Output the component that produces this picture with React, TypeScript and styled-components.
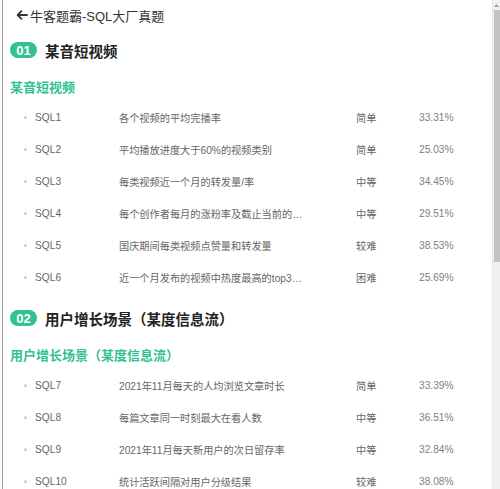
import React from 'react'
import styled, { createGlobalStyle } from 'styled-components'

const GlobalStyle = createGlobalStyle`
  html, body {
    margin: 0;
    padding: 0;
    background: #ffffff;
    font-family: "Liberation Sans", "Noto Sans CJK SC", sans-serif;
  }
`

const green = '#33c28f'

const Viewport = styled.div`
  height: 489px;
  width: 492px;
  overflow-y: auto;
  overflow-x: hidden;
  background: #fff;
  scrollbar-width: none;
`

// drawn scrollbar (headless shots hide the native one)
const ScrollTrack = styled.div`
  position: fixed;
  top: 0;
  right: 0;
  width: 8px;
  height: 489px;
  background: #f0f0f0;
  border-left: 1px solid #e8e8e8;
  box-sizing: border-box;
`

const ScrollArrow = styled.div`
  height: 10px;
  display: flex;
  align-items: center;
  justify-content: center;
`

const ScrollThumb = styled.div`
  margin-left: 1px;
  width: 6px;
  height: 252px;
  background: #c3c3c3;
`

const Page = styled.div`
  margin-left: 2px;
  border-left: 1px solid #9c9c9c;
  padding: 0 0 80px 7px;
`

const TitleBar = styled.div`
  height: 30px;
  display: flex;
  align-items: center;
  gap: 2px;
  padding-left: 6px;
  font-size: 13px;
  color: #333;
`

const Section = styled.section`
  padding-top: 5px;
  & + & {
    padding-top: 10px;
  }
`

const SectionHead = styled.div`
  height: 30px;
  display: flex;
  align-items: center;
  gap: 8px;
`

const Badge = styled.span`
  width: 27px;
  height: 16px;
  border-radius: 8px;
  background: ${green};
  color: #fff;
  font-size: 13px;
  font-weight: bold;
  display: flex;
  align-items: center;
  justify-content: center;
`

const SectionTitle = styled.h2`
  margin: 0;
  font-size: 14.5px;
  font-weight: bold;
  color: #222;
`

const SubTitle = styled.h3`
  margin: 6px 0 0;
  height: 30px;
  display: flex;
  align-items: center;
  font-size: 13px;
  font-weight: bold;
  color: ${green};
`

const Row = styled.div`
  height: 32px;
  display: grid;
  grid-template-columns: 11px 84px 237px 63px 60px;
  align-items: center;
  font-size: 10.2px;
  color: #666;
  padding-left: 14px;
`

const Dot = styled.span`
  width: 3px;
  height: 3px;
  border-radius: 50%;
  background: #cfcfcf;
`

const Cell = styled.span<{ $muted?: boolean; $max?: number }>`
  white-space: nowrap;
  overflow: hidden;
  text-overflow: ellipsis;
  max-width: ${({ $max }) => ($max ? `${$max}px` : 'none')};
  color: ${({ $muted }) => ($muted ? '#808080' : '#666')};
`

type Item = [string, string, string, string]

const sections: { no: string; name: string; items: Item[] }[] = [
  {
    no: '01',
    name: '某音短视频',
    items: [
      ['SQL1', '各个视频的平均完播率', '简单', '33.31%'],
      ['SQL2', '平均播放进度大于60%的视频类别', '简单', '25.03%'],
      ['SQL3', '每类视频近一个月的转发量/率', '中等', '34.45%'],
      ['SQL4', '每个创作者每月的涨粉率及截止当前的总粉丝量', '中等', '29.51%'],
      ['SQL5', '国庆期间每类视频点赞量和转发量', '较难', '38.53%'],
      ['SQL6', '近一个月发布的视频中热度最高的top3视频', '困难', '25.69%'],
    ],
  },
  {
    no: '02',
    name: '用户增长场景（某度信息流）',
    items: [
      ['SQL7', '2021年11月每天的人均浏览文章时长', '简单', '33.39%'],
      ['SQL8', '每篇文章同一时刻最大在看人数', '中等', '36.51%'],
      ['SQL9', '2021年11月每天新用户的次日留存率', '中等', '32.84%'],
      ['SQL10', '统计活跃间隔对用户分级结果', '较难', '38.08%'],
      ['SQL11', '每天的日活数及新用户占比', '较难', '35.86%'],
      ['SQL12', '连续签到领金币', '困难', '31.47%'],
    ],
  },
  {
    no: '03',
    name: '电商场景（某东商城）',
    items: [
      ['SQL13', '计算商城中2021年每月的GMV', '简单', '39.64%'],
      ['SQL14', '统计2021年10月每个退货率不大于0.5的商品各项指标', '中等', '36.12%'],
      ['SQL15', '某店铺的各商品毛利率及店铺整体毛利率', '中等', '30.28%'],
      ['SQL16', '零食类商品中复购率top3高的商品', '中等', '36.93%'],
      ['SQL17', '10月的新户客单价和获客成本', '较难', '35.21%'],
      ['SQL18', '店铺901国庆期间的7日动销率和滞销率', '困难', '27.48%'],
    ],
  },
]

function BackArrow() {
  return (
    <svg width="12" height="10" viewBox="0 0 12 10" fill="none">
      <path d="M11 5H2M5.5 1.2L1.6 5l3.9 3.8" stroke="#333" strokeWidth="1.8" strokeLinecap="round" strokeLinejoin="round" />
    </svg>
  )
}

export default function App() {
  return (
    <>
      <GlobalStyle />
      <Viewport>
        <Page>
          <TitleBar>
            <BackArrow />
            <span>牛客题霸-SQL大厂真题</span>
          </TitleBar>
          {sections.map((s) => (
            <Section key={s.no}>
              <SectionHead>
                <Badge>{s.no}</Badge>
                <SectionTitle>{s.name}</SectionTitle>
              </SectionHead>
              <SubTitle>{s.name}</SubTitle>
              {s.items.map(([id, title, level, rate]) => (
                <Row key={id}>
                  <Dot />
                  <Cell>{id}</Cell>
                  <Cell $max={186}>{title}</Cell>
                  <Cell>{level}</Cell>
                  <Cell $muted>{rate}</Cell>
                </Row>
              ))}
            </Section>
          ))}
        </Page>
      </Viewport>
      <ScrollTrack>
        <ScrollArrow>
          <svg width="5" height="3" viewBox="0 0 5 3">
            <path d="M0 3L2.5 0L5 3Z" fill="#a3a3a3" />
          </svg>
        </ScrollArrow>
        <ScrollThumb />
      </ScrollTrack>
    </>
  )
}
